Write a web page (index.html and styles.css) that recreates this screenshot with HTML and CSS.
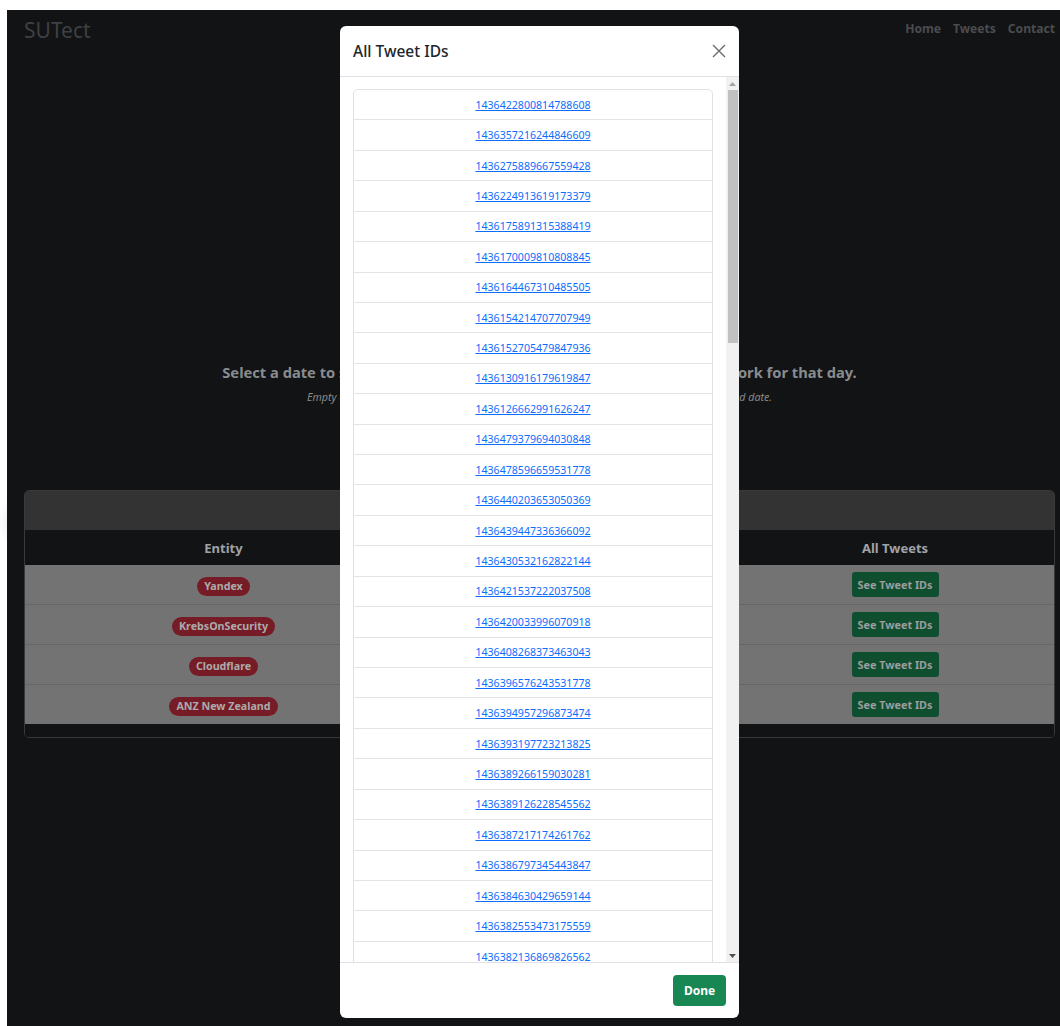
FILE: index.html
```html
<!DOCTYPE html>
<html lang="en">
<head>
<meta charset="utf-8">
<title>SUTect</title>
<link rel="stylesheet" href="styles.css">
</head>
<body>
<div class="screen">
  <header class="topbar">
    <a class="brand" href="#">SUTect</a>
    <nav class="links">
      <a href="#">Home</a>
      <a href="#">Tweets</a>
      <a href="#">Contact</a>
    </nav>
  </header>

  <section class="intro">
    <h2 class="intro-title">Select a date to see the trending entities and their general tweet network for that day.</h2>
    <p class="intro-note">Empty tables means that no entities or related tweets were recorded or found on the selected date.</p>
  </section>

  <section class="card">
    <div class="card-head">Entities</div>
    <table class="entities">
      <colgroup>
        <col class="col-entity">
        <col class="col-count">
        <col class="col-tweets">
      </colgroup>
      <thead>
        <tr><th>Entity</th><th>Mentions</th><th>All Tweets</th></tr>
      </thead>
      <tbody>
        <tr><td><span class="pill">Yandex</span></td><td><span class="count">11</span></td><td><button class="btn-ids">See Tweet IDs</button></td></tr>
        <tr><td><span class="pill">KrebsOnSecurity</span></td><td><span class="count">6</span></td><td><button class="btn-ids">See Tweet IDs</button></td></tr>
        <tr><td><span class="pill">Cloudflare</span></td><td><span class="count">4</span></td><td><button class="btn-ids">See Tweet IDs</button></td></tr>
        <tr><td><span class="pill">ANZ New Zealand</span></td><td><span class="count">3</span></td><td><button class="btn-ids">See Tweet IDs</button></td></tr>
      </tbody>
    </table>
    <div class="card-foot"></div>
  </section>

  <div class="modal">
    <div class="modal-header">
      <h5 class="modal-title">All Tweet IDs</h5>
      <button class="close" aria-label="Close">
        <svg width="14" height="14" viewBox="0 0 14 14"><path d="M1 1L13 13M13 1L1 13" stroke="#6b6b6b" stroke-width="1.4" fill="none"/></svg>
      </button>
    </div>
    <div class="modal-body">
      <div class="scroll-area">
        <ul class="id-list">
          <li><a href="#">1436422800814788608</a></li>
          <li><a href="#">1436357216244846609</a></li>
          <li><a href="#">1436275889667559428</a></li>
          <li><a href="#">1436224913619173379</a></li>
          <li><a href="#">1436175891315388419</a></li>
          <li><a href="#">1436170009810808845</a></li>
          <li><a href="#">1436164467310485505</a></li>
          <li><a href="#">1436154214707707949</a></li>
          <li><a href="#">1436152705479847936</a></li>
          <li><a href="#">1436130916179619847</a></li>
          <li><a href="#">1436126662991626247</a></li>
          <li><a href="#">1436479379694030848</a></li>
          <li><a href="#">1436478596659531778</a></li>
          <li><a href="#">1436440203653050369</a></li>
          <li><a href="#">1436439447336366092</a></li>
          <li><a href="#">1436430532162822144</a></li>
          <li><a href="#">1436421537222037508</a></li>
          <li><a href="#">1436420033996070918</a></li>
          <li><a href="#">1436408268373463043</a></li>
          <li><a href="#">1436396576243531778</a></li>
          <li><a href="#">1436394957296873474</a></li>
          <li><a href="#">1436393197723213825</a></li>
          <li><a href="#">1436389266159030281</a></li>
          <li><a href="#">1436389126228545562</a></li>
          <li><a href="#">1436387217174261762</a></li>
          <li><a href="#">1436386797345443847</a></li>
          <li><a href="#">1436384630429659144</a></li>
          <li><a href="#">1436382553473175559</a></li>
          <li><a href="#">1436382136869826562</a></li>
          <li><a href="#">1436381742904250371</a></li>
          <li><a href="#">1436380915562172417</a></li>
          <li><a href="#">1436379658826063879</a></li>
          <li><a href="#">1436378311028510722</a></li>
          <li><a href="#">1436377205464424451</a></li>
          <li><a href="#">1436375964508205058</a></li>
          <li><a href="#">1436374601971617794</a></li>
          <li><a href="#">1436373288395575300</a></li>
          <li><a href="#">1436372044880846849</a></li>
          <li><a href="#">1436370551960190977</a></li>
          <li><a href="#">1436369345229963269</a></li>
          <li><a href="#">1436368126851846145</a></li>
          <li><a href="#">1436366790454394882</a></li>
          <li><a href="#">1436365542136254466</a></li>
          <li><a href="#">1436364218329309186</a></li>
          <li><a href="#">1436362955042697217</a></li>
          <li><a href="#">1436361702430097409</a></li>
          <li><a href="#">1436360389487198210</a></li>
          <li><a href="#">1436359071888519170</a></li>
          <li><a href="#">1436357805732720641</a></li>
          <li><a href="#">1436356513555173378</a></li>
          <li><a href="#">1436355247911362560</a></li>
          <li><a href="#">1436353994233294848</a></li>
          <li><a href="#">1436352731366133761</a></li>
          <li><a href="#">1436351468473163777</a></li>
          <li><a href="#">1436350202439671808</a></li>
          <li><a href="#">1436348937554976769</a></li>
          <li><a href="#">1436347671575453697</a></li>
          <li><a href="#">1436346405621469184</a></li>
          <li><a href="#">1436345139972272128</a></li>
          <li><a href="#">1436343874239328256</a></li>
          <li><a href="#">1436342608708403200</a></li>
          <li><a href="#">1436341343307554817</a></li>
          <li><a href="#">1436340077692993537</a></li>
          <li><a href="#">1436338812405764099</a></li>
          <li><a href="#">1436337546929618945</a></li>
          <li><a href="#">1436336281583661056</a></li>
          <li><a href="#">1436335016057290755</a></li>
          <li><a href="#">1436333750862090243</a></li>
          <li><a href="#">1436332485407842306</a></li>
          <li><a href="#">1436331219931934721</a></li>
          <li><a href="#">1436329954552250369</a></li>
          <li><a href="#">1436328689061969922</a></li>
          <li><a href="#">1436327423619272705</a></li>
          <li><a href="#">1436326158180790274</a></li>
          <li><a href="#">1436324892742266883</a></li>
          <li><a href="#">1436323627303743490</a></li>
          <li><a href="#">1436322361865220097</a></li>
          <li><a href="#">1436321096426696704</a></li>
          <li><a href="#">1436319830988173313</a></li>
          <li><a href="#">1436318565549649922</a></li>
          <li><a href="#">1436317300111126529</a></li>
          <li><a href="#">1436316034672603136</a></li>
          <li><a href="#">1436314769234079745</a></li>
          <li><a href="#">1436313503795556354</a></li>
          <li><a href="#">1436312238357032961</a></li>
          <li><a href="#">1436310972918509568</a></li>
          <li><a href="#">1436309707479986177</a></li>
          <li><a href="#">1436308442041462786</a></li>
          <li><a href="#">1436307176602939393</a></li>
          <li><a href="#">1436305911164416000</a></li>
          <li><a href="#">1436304645725892609</a></li>
          <li><a href="#">1436303380287369218</a></li>
          <li><a href="#">1436302114848845825</a></li>
          <li><a href="#">1436300849410322432</a></li>
          <li><a href="#">1436299583971799041</a></li>
          <li><a href="#">1436298318533275650</a></li>
          <li><a href="#">1436297053094752257</a></li>
          <li><a href="#">1436295787656228864</a></li>
          <li><a href="#">1436294522217705473</a></li>
        </ul>
      </div>
      <div class="scrollbar" aria-hidden="true">
        <span class="sb-btn">
          <svg width="7" height="4" viewBox="0 0 7 4"><path d="M3.5 0L7 4H0Z" fill="#a3a3a3"/></svg>
        </span>
        <span class="sb-thumb"></span>
        <span class="sb-track"></span>
        <span class="sb-btn">
          <svg width="7" height="4" viewBox="0 0 7 4"><path d="M0 0H7L3.5 4Z" fill="#505050"/></svg>
        </span>
      </div>
    </div>
    <div class="modal-footer">
      <button class="btn-done">Done</button>
    </div>
  </div>
</div>
</body>
</html>
```

FILE: styles.css
```css
html, body {
  overflow: hidden;
}

body {
  margin: 0;
  background: #fff radial-gradient(circle at 30px 522px, #e3e3e3 0, #e3e3e3 10px, #fff 32px) no-repeat;
  font-family: "Noto Sans", "Liberation Sans", sans-serif;
}

/* dimmed page behind the dialog */
.screen {
  position: relative;
  width: 1065px;
  height: 1016px;
  margin: 10px 0 0 7px;
  background: #121315;
  overflow: hidden;
}

.topbar {
  display: flex;
  justify-content: space-between;
  align-items: flex-start;
  height: 40px;
  padding: 6px 17px 0 17px;
  box-sizing: border-box;
}

.brand {
  font-size: 21px;
  line-height: 28px;
  color: #3e4043;
  text-decoration: none;
}

.links {
  display: flex;
  gap: 12px;
  margin-top: 3.5px;
}

.links a {
  font-size: 12.1px;
  line-height: 17px;
  font-weight: 700;
  color: #4a4c4f;
  text-decoration: none;
}

.intro {
  margin-top: 311.5px;
  text-align: center;
}

.intro-title {
  margin: 0;
  font-size: 14.7px;
  line-height: 20px;
  font-weight: 700;
  color: #898c8f;
}

.intro-note {
  margin: 8px 0 0;
  font-size: 10.7px;
  line-height: 15px;
  font-style: italic;
  color: #8a8a8a;
}

.card {
  margin: 85.6px 17px 0;
  border: 1px solid #38393b;
  border-radius: 5px;
  overflow: hidden;
}

.card-head {
  height: 39px;
  background: #333333;
  display: flex;
  align-items: center;
  justify-content: center;
  font-size: 14px;
  font-weight: 700;
  color: #6a6a6a;
}

.entities {
  width: 100%;
  border-collapse: separate;
  border-spacing: 0;
  table-layout: fixed;
}

.col-entity { width: 397px; }
.col-count { width: 314px; }
.col-tweets { width: 318px; }

.entities th {
  height: 35px;
  padding: 0;
  background: #121315;
  color: #a0a3a6;
  font-size: 13px;
  font-weight: 700;
  text-align: center;
}

.entities td {
  box-sizing: border-box;
  height: 40px;
  padding: 0;
  background: #737373;
  border-bottom: 1px solid #666666;
  text-align: center;
  font-size: 0;
  line-height: 0;
}

.entities tr:last-child td {
  height: 39px;
  border-bottom: 0;
}

.count {
  font-size: 11px;
  line-height: 16px;
  color: #2a2a2a;
}

.card-foot {
  height: 13px;
  background: #121315;
}

.pill {
  display: inline-block;
  height: 19px;
  margin-top: 4px;
  padding: 0 7px;
  border-radius: 10px;
  background: #761c26;
  color: #ababab;
  font-size: 10.7px;
  line-height: 19px;
  font-weight: 700;
  vertical-align: middle;
}

.btn-ids {
  width: 87px;
  height: 25px;
  padding: 0;
  border: 0;
  border-radius: 3px;
  background: #0f4f30;
  color: #9d9d9d;
  font-family: "Noto Sans", "Liberation Sans", sans-serif;
  font-size: 10.8px;
  line-height: 25px;
  font-weight: 700;
  vertical-align: middle;
}

/* dialog */
.modal {
  position: absolute;
  left: 333px;
  top: 16px;
  width: 399px;
  height: 992px;
  background: #fff;
  border-radius: 6px;
  display: flex;
  flex-direction: column;
  overflow: hidden;
}

.modal-header {
  flex: none;
  height: 50px;
  border-bottom: 1px solid #dee2e6;
  display: flex;
  align-items: center;
  justify-content: space-between;
  padding: 0 13px;
}

.modal-title {
  margin: 0;
  font-size: 15.5px;
  line-height: 20px;
  font-weight: 500;
  color: #212529;
}

.close {
  width: 14px;
  height: 14px;
  padding: 0;
  border: 0;
  background: none;
  display: flex;
}

.modal-body {
  flex: 1;
  min-height: 0;
  display: flex;
}

.scroll-area {
  flex: 1;
  min-width: 0;
  overflow-y: auto;
  scrollbar-width: none;
  padding: 12px 13px 12px 13px;
}

.scrollbar {
  flex: none;
  width: 13px;
  background: #f1f1f1;
  display: flex;
  flex-direction: column;
}

.sb-btn {
  flex: none;
  height: 13px;
  display: flex;
  align-items: center;
  justify-content: center;
}

.sb-thumb {
  flex: none;
  height: 253px;
  margin: 0 1px 0 2px;
  background: #c1c1c1;
}

.sb-track {
  flex: 1;
}

.id-list {
  list-style: none;
  margin: 0;
  padding: 0;
  border: 1px solid #dfe2e5;
  border-radius: 5px;
}

.id-list li {
  padding: 6.7px 12px 5.3px;
  font-size: 10.6px;
  line-height: 17.43px;
  text-align: center;
  border-top: 1px solid #e1e4e7;
}

.id-list li:first-child {
  border-top: 0;
}

.id-list a {
  color: #0d6efd;
  text-decoration: underline;
}

.modal-footer {
  flex: none;
  height: 55px;
  border-top: 1px solid #dee2e6;
  display: flex;
  justify-content: flex-end;
  align-items: center;
  padding: 0 13px;
}

.btn-done {
  width: 53px;
  height: 31px;
  padding: 0;
  border: 0;
  border-radius: 4px;
  background: #198754;
  color: #fff;
  font-family: "Noto Sans", "Liberation Sans", sans-serif;
  font-size: 12px;
  font-weight: 700;
}
```
